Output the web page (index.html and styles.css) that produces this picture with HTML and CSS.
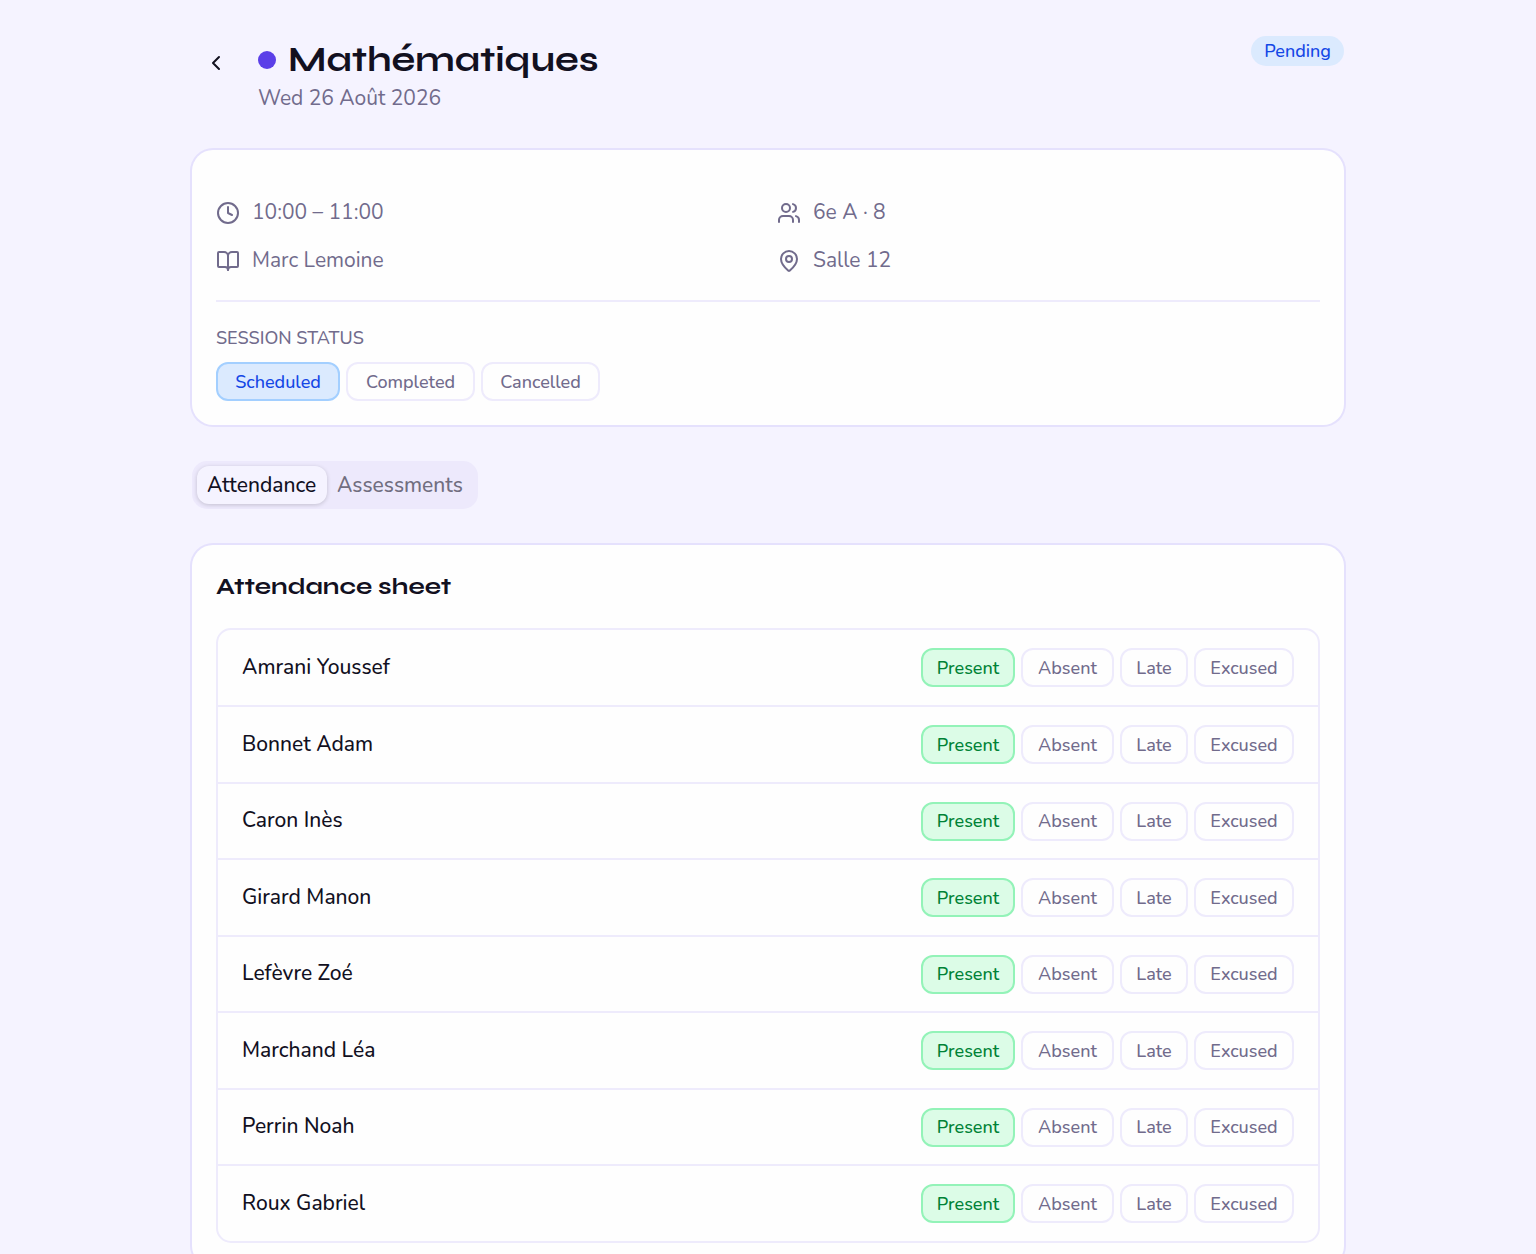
FILE: index.html
```html
<!DOCTYPE html>
<html lang="en">
<head>
<meta charset="utf-8">
<meta name="viewport" content="width=device-width, initial-scale=1">
<title>Mathématiques – Session</title>
<link rel="stylesheet" href="styles.css">
</head>
<body>
<main class="page">
  <header class="header">
    <button class="back" type="button" aria-label="Back">
      <svg class="icon" viewBox="0 0 24 24" aria-hidden="true"><path d="m15 18-6-6 6-6"/></svg>
    </button>
    <div class="heading">
      <h1 class="title"><span class="dot"></span>Mathématiques</h1>
      <p class="date text">Wed 26 Août 2026</p>
    </div>
    <span class="badge">Pending</span>
  </header>

  <section class="card details" aria-label="Session details">
    <ul class="facts">
      <li class="fact">
        <svg class="icon" viewBox="0 0 24 24" aria-hidden="true"><circle cx="12" cy="12" r="10"/><path d="M12 6v6l4 2"/></svg>
        <span class="text">10:00 – 11:00</span>
      </li>
      <li class="fact">
        <svg class="icon" viewBox="0 0 24 24" aria-hidden="true"><path d="M16 21v-2a4 4 0 0 0-4-4H6a4 4 0 0 0-4 4v2"/><path d="M16 3.128a4 4 0 0 1 0 7.744"/><path d="M22 21v-2a4 4 0 0 0-3-3.87"/><circle cx="9" cy="7" r="4"/></svg>
        <span class="text">6e A · 8</span>
      </li>
      <li class="fact">
        <svg class="icon" viewBox="0 0 24 24" aria-hidden="true"><path d="M12 7v14"/><path d="M3 18a1 1 0 0 1-1-1V4a1 1 0 0 1 1-1h5a4 4 0 0 1 4 4 4 4 0 0 1 4-4h5a1 1 0 0 1 1 1v13a1 1 0 0 1-1 1h-6a3 3 0 0 0-3 3 3 3 0 0 0-3-3z"/></svg>
        <span class="text">Marc Lemoine</span>
      </li>
      <li class="fact">
        <svg class="icon" viewBox="0 0 24 24" aria-hidden="true"><path d="M20 10c0 4.993-5.539 10.193-7.399 11.799a1 1 0 0 1-1.202 0C9.539 20.193 4 14.993 4 10a8 8 0 0 1 16 0"/><circle cx="12" cy="10" r="3"/></svg>
        <span class="text">Salle 12</span>
      </li>
    </ul>
    <div class="status">
      <h2 class="label" id="status-label">SESSION STATUS</h2>
      <div class="status-options" role="group" aria-labelledby="status-label">
        <button class="chip chip-blue" type="button" aria-pressed="true">Scheduled</button>
        <button class="chip" type="button" aria-pressed="false">Completed</button>
        <button class="chip" type="button" aria-pressed="false">Cancelled</button>
      </div>
    </div>
  </section>

  <div class="tabs" role="tablist">
    <button class="tab tab-active" type="button" role="tab" aria-selected="true">Attendance</button>
    <button class="tab" type="button" role="tab" aria-selected="false">Assessments</button>
  </div>

  <section class="card sheet">
    <h2 class="sheet-title">Attendance sheet</h2>
    <ul class="students">
      <li class="student"><span class="text" id="s1">Amrani Youssef</span><div class="marks" role="group" aria-labelledby="s1"><button class="chip chip-green" type="button">Present</button><button class="chip" type="button">Absent</button><button class="chip" type="button">Late</button><button class="chip" type="button">Excused</button></div></li>
      <li class="student"><span class="text" id="s2">Bonnet Adam</span><div class="marks" role="group" aria-labelledby="s2"><button class="chip chip-green" type="button">Present</button><button class="chip" type="button">Absent</button><button class="chip" type="button">Late</button><button class="chip" type="button">Excused</button></div></li>
      <li class="student"><span class="text" id="s3">Caron Inès</span><div class="marks" role="group" aria-labelledby="s3"><button class="chip chip-green" type="button">Present</button><button class="chip" type="button">Absent</button><button class="chip" type="button">Late</button><button class="chip" type="button">Excused</button></div></li>
      <li class="student"><span class="text" id="s4">Girard Manon</span><div class="marks" role="group" aria-labelledby="s4"><button class="chip chip-green" type="button">Present</button><button class="chip" type="button">Absent</button><button class="chip" type="button">Late</button><button class="chip" type="button">Excused</button></div></li>
      <li class="student"><span class="text" id="s5">Lefèvre Zoé</span><div class="marks" role="group" aria-labelledby="s5"><button class="chip chip-green" type="button">Present</button><button class="chip" type="button">Absent</button><button class="chip" type="button">Late</button><button class="chip" type="button">Excused</button></div></li>
      <li class="student"><span class="text" id="s6">Marchand Léa</span><div class="marks" role="group" aria-labelledby="s6"><button class="chip chip-green" type="button">Present</button><button class="chip" type="button">Absent</button><button class="chip" type="button">Late</button><button class="chip" type="button">Excused</button></div></li>
      <li class="student"><span class="text" id="s7">Perrin Noah</span><div class="marks" role="group" aria-labelledby="s7"><button class="chip chip-green" type="button">Present</button><button class="chip" type="button">Absent</button><button class="chip" type="button">Late</button><button class="chip" type="button">Excused</button></div></li>
      <li class="student"><span class="text" id="s8">Roux Gabriel</span><div class="marks" role="group" aria-labelledby="s8"><button class="chip chip-green" type="button">Present</button><button class="chip" type="button">Absent</button><button class="chip" type="button">Late</button><button class="chip" type="button">Excused</button></div></li>
    </ul>
  </section>
</main>
</body>
</html>
```
FILE: styles.css
```css
:root {
  --bg: #f5f3ff;
  --surface: #fefefe;
  --ink: #12101f;
  --muted: #716b8c;
  --line: #eeebfc;
  --ring: #e5e1fd;
  --body-font: Nunito, Lato, sans-serif;
  --display-font: Syne, "DejaVu Sans", sans-serif;
}

* { box-sizing: border-box; }

body {
  margin: 0;
  background: var(--bg);
  color: var(--ink);
  font: 21px/30px var(--body-font);
}

h1, h2, p, ul { margin: 0; padding: 0; }
ul { list-style: none; }
button { font: inherit; color: inherit; cursor: pointer; }

.page {
  display: flex;
  flex-direction: column;
  gap: 36px;
  max-width: 1200px;
  margin: 0 auto;
  padding: 36px 24px;
}

.icon {
  flex: none;
  width: 24px;
  height: 24px;
  fill: none;
  stroke: currentColor;
  stroke-width: 2;
  stroke-linecap: round;
  stroke-linejoin: round;
}
.text { padding-bottom: 2px; line-height: 28px; }

.header { display: flex; align-items: flex-start; gap: 18px; }
.back {
  display: flex;
  align-items: center;
  justify-content: center;
  width: 48px;
  height: 48px;
  margin-top: 3px;
  padding: 0;
  border: 0;
  border-radius: 12px;
  background: none;
}
.heading { flex: 1; }
.title {
  display: flex;
  align-items: center;
  gap: 12px;
  font: bold 35px/48px var(--display-font);
}
.dot { width: 18px; height: 18px; border-radius: 50%; background: #5b3fe8; }
.date { color: var(--muted); }
.badge {
  padding: 3px 13px;
  border-radius: 15px;
  background: #dbeafe;
  color: #1447e6;
  font-size: 18px;
  font-weight: 500;
  line-height: 24px;
}

.card {
  border-radius: 21px;
  background: var(--surface);
  box-shadow: 0 0 0 2px var(--ring);
}
.details { padding: 48px 24px 24px; }
.facts { display: grid; grid-template-columns: 1fr 1fr; gap: 18px; }
.fact { display: flex; align-items: center; gap: 12px; color: var(--muted); }
.status { margin-top: 24px; padding-top: 24px; border-top: 2px solid var(--line); }
.label {
  margin-bottom: 12px;
  color: var(--muted);
  font-size: 18px;
  font-weight: 500;
  line-height: 24px;
}
.status-options { display: grid; grid-template-columns: 124px 129px 119px; gap: 6px; }

.chip {
  height: 39px;
  padding: 0;
  border: 2px solid var(--line);
  border-radius: 12px;
  background: transparent;
  color: var(--muted);
  font-size: 18px;
  font-weight: 500;
  line-height: 24px;
}
.chip-blue { border-color: #a3cfff; background: #dbeafe; color: #1447e6; }
.chip-green { border-color: #93f3b8; background: #dcfce7; color: #008236; }

.tabs {
  display: grid;
  grid-template-columns: 130px 146px;
  align-self: flex-start;
  height: 48px;
  padding: 5px;
  border-radius: 15px;
  background: #ede9fc;
}
.tab {
  padding: 0 10px;
  border: 0;
  border-radius: 12px;
  background: none;
  color: #716e80;
  font-weight: 500;
  line-height: 28px;
  text-align: left;
}
.tab-active {
  background: var(--bg);
  color: var(--ink);
  box-shadow: 0 1px 4px rgb(0 0 0 / 18%);
}

.sheet { padding: 24px; }
.sheet-title { margin-bottom: 23px; font: bold 24px/36px var(--display-font); }
.students { border: 2px solid var(--line); border-radius: 15px; font-weight: 500; }
.student {
  display: flex;
  align-items: center;
  justify-content: space-between;
  min-height: 76px;
  padding: 0 24px;
}
.student:nth-child(even) { min-height: 77px; }
.student:first-child { min-height: 75px; }
.student + .student { border-top: 2px solid var(--line); }
.marks { display: grid; grid-template-columns: 94px 93px 68px 100px; gap: 6px; }
```
